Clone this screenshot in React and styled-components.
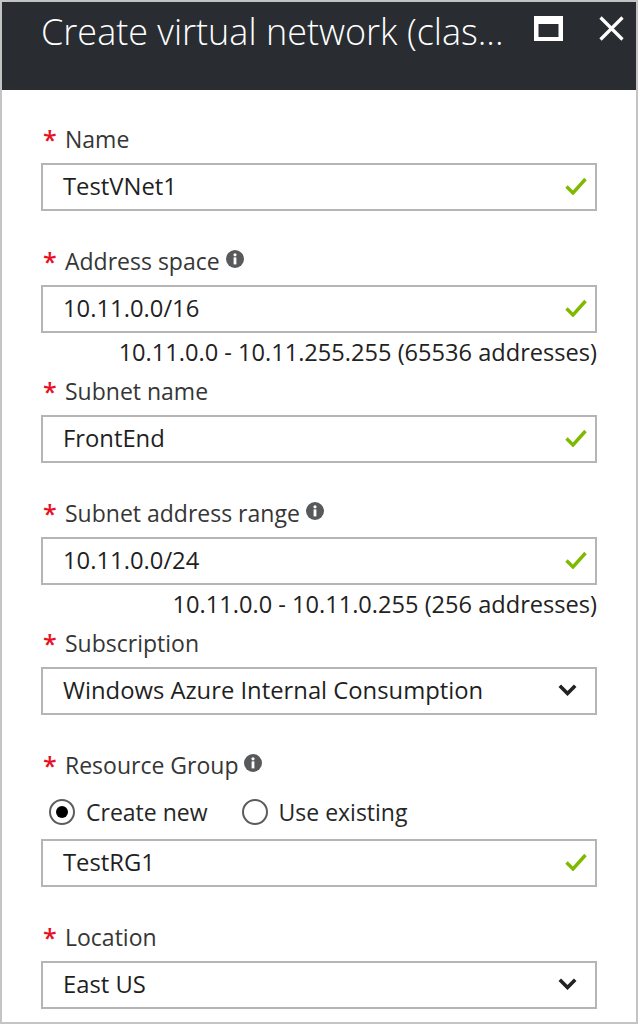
import React from "react";
import styled, { createGlobalStyle } from "styled-components";

const Global = createGlobalStyle`
  html, body { margin: 0; padding: 0; background: #ffffff; }
  body { font-family: "Open Sans", "Noto Sans", "DejaVu Sans", sans-serif; }
  * { box-sizing: border-box; }
`;

const Panel = styled.div`
  width: 638px;
  height: 1024px;
  border: 2px solid #c4c4c4;
  background: #ffffff;
  overflow: hidden;
  display: flex;
  flex-direction: column;
`;

const Header = styled.header`
  height: 88px;
  flex: none;
  background: #292d32;
  display: flex;
  align-items: flex-start;
  padding: 10px 12px 0 39px;
`;

const Title = styled.h1`
  flex: 1;
  min-width: 0;
  margin: 0 20px 0 0;
  font-size: 36px;
  font-weight: 300;
  line-height: 40px;
  color: #ffffff;
  white-space: nowrap;
`;

const IconButton = styled.button`
  flex: none;
  border: 0;
  padding: 0;
  margin: 4px 0 0 ${(p) => p.$gap || 0}px;
  background: transparent;
  display: flex;
  cursor: pointer;
`;

const Body = styled.div`
  padding: 34px 39px 0 39px;
  display: flex;
  flex-direction: column;
`;

const Field = styled.div`
  display: flex;
  flex-direction: column;
  margin-bottom: ${(p) => (p.$helper ? 12 : 35)}px;
`;

const Label = styled.div`
  height: 30px;
  display: flex;
  align-items: center;
  padding-left: 2px;
  font-size: 23px;
  line-height: 30px;
  color: #363636;
  margin-bottom: 9px;
`;

const Star = styled.span`
  width: 22px;
  flex: none;
  color: #e81123;
  align-self: flex-start;
  font-size: 25px;
  font-weight: 600;
  line-height: 30px;
`;

const InfoWrap = styled.span`
  display: inline-flex;
  margin-left: 6px;
  margin-bottom: 5px;
`;

const Box = styled.div`
  height: 48px;
  border: 2px solid #b5b5b5;
  background: #ffffff;
  display: flex;
  align-items: center;
  padding: 0 ${(p) => (p.$select ? 18 : 8)}px 3px 20px;
`;

const Value = styled.span`
  flex: 1;
  font-size: 23.8px;
  color: #1f1f1f;
  white-space: nowrap;
`;

const Helper = styled.div`
  margin-top: 7px;
  height: 24px;
  line-height: 24px;
  text-align: right;
  font-size: 23.6px;
  color: #222222;
  white-space: nowrap;
`;

const RadioRow = styled.div`
  display: flex;
  align-items: center;
  height: 30px;
  margin: 8px 0 12px 8px;
`;

const RadioOption = styled.label`
  display: flex;
  align-items: center;
  margin-right: 34px;
  font-size: 23px;
  color: #262626;
  cursor: pointer;
`;

const RadioCircle = styled.span`
  width: 26px;
  height: 26px;
  border-radius: 50%;
  border: 2px solid #5c5c5c;
  display: flex;
  align-items: center;
  justify-content: center;
  margin-right: 11px;
  &::after {
    content: "";
    width: 12px;
    height: 12px;
    border-radius: 50%;
    background: ${(p) => (p.$checked ? "#000000" : "transparent")};
  }
`;

const InfoIcon = () => (
  <svg width="18" height="18" viewBox="0 0 18 18">
    <circle cx="9" cy="9" r="9" fill="#58595b" />
    <circle cx="9" cy="4.8" r="1.6" fill="#ffffff" />
    <rect x="7.6" y="7.4" width="2.8" height="7" fill="#ffffff" />
  </svg>
);

const Check = () => (
  <svg width="22" height="18" viewBox="0 0 22 18">
    <polyline
      points="1.5,9.5 8,16 20.5,2"
      fill="none"
      stroke="#7fba00"
      strokeWidth="3.4"
    />
  </svg>
);

const Chevron = () => (
  <svg width="19" height="12" viewBox="0 0 19 12">
    <polyline
      points="1.8,1.8 9.5,9.5 17.2,1.8"
      fill="none"
      stroke="#222222"
      strokeWidth="3.6"
    />
  </svg>
);

const MaxIcon = () => (
  <svg width="29" height="25" viewBox="0 0 29 25">
    <path
      fillRule="evenodd"
      fill="#ffffff"
      d="M0 0H29V25H0Z M4.5 8H24.5V21H4.5Z"
    />
  </svg>
);

const CloseIcon = () => (
  <svg width="25" height="25" viewBox="0 0 25 25">
    <path d="M1.5 1.5L23.5 23.5M23.5 1.5L1.5 23.5" stroke="#ffffff" strokeWidth="3.2" />
  </svg>
);

function FieldLabel({ children, info }) {
  return (
    <Label>
      <Star>*</Star>
      {children}
      {info && (
        <InfoWrap>
          <InfoIcon />
        </InfoWrap>
      )}
    </Label>
  );
}

function TextBox({ value }) {
  return (
    <Box>
      <Value>{value}</Value>
      <Check />
    </Box>
  );
}

function SelectBox({ value }) {
  return (
    <Box $select>
      <Value>{value}</Value>
      <Chevron />
    </Box>
  );
}

export default function App() {
  return (
    <>
      <Global />
      <Panel>
        <Header>
          <Title title="Create virtual network (classic)">Create virtual network (clas...</Title>
          <IconButton aria-label="Maximize">
            <MaxIcon />
          </IconButton>
          <IconButton aria-label="Close" $gap={36}>
            <CloseIcon />
          </IconButton>
        </Header>
        <Body>
          <Field>
            <FieldLabel>Name</FieldLabel>
            <TextBox value="TestVNet1" />
          </Field>
          <Field $helper>
            <FieldLabel info>Address space</FieldLabel>
            <TextBox value="10.11.0.0/16" />
            <Helper>10.11.0.0 - 10.11.255.255 (65536 addresses)</Helper>
          </Field>
          <Field>
            <FieldLabel>Subnet name</FieldLabel>
            <TextBox value="FrontEnd" />
          </Field>
          <Field $helper>
            <FieldLabel info>Subnet address range</FieldLabel>
            <TextBox value="10.11.0.0/24" />
            <Helper>10.11.0.0 - 10.11.0.255 (256 addresses)</Helper>
          </Field>
          <Field>
            <FieldLabel>Subscription</FieldLabel>
            <SelectBox value="Windows Azure Internal Consumption" />
          </Field>
          <Field>
            <FieldLabel info>Resource Group</FieldLabel>
            <RadioRow>
              <RadioOption>
                <RadioCircle $checked />
                Create new
              </RadioOption>
              <RadioOption>
                <RadioCircle />
                Use existing
              </RadioOption>
            </RadioRow>
            <TextBox value="TestRG1" />
          </Field>
          <Field>
            <FieldLabel>Location</FieldLabel>
            <SelectBox value="East US" />
          </Field>
        </Body>
      </Panel>
    </>
  );
}
